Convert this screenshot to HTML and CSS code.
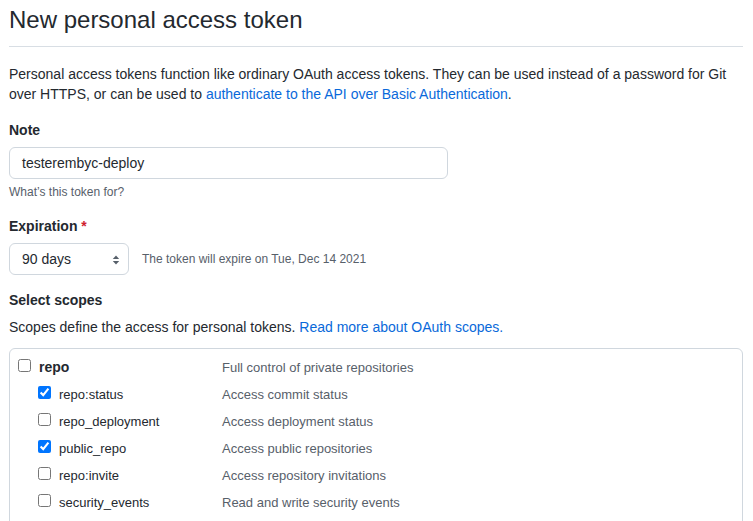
FILE: index.html
```html
<!DOCTYPE html>
<html lang="en">
<head>
<meta charset="utf-8">
<title>New personal access token</title>
<link rel="stylesheet" href="styles.css">
</head>
<body>
<div class="page">
  <div class="subhead">
    <h2 class="subhead-heading">New personal access token</h2>
  </div>
  <p class="intro">Personal access tokens function like ordinary OAuth access tokens. They can be used instead of a password for Git over HTTPS, or can be used to <a href="#">authenticate to the API over Basic Authentication</a>.</p>

  <div class="form-group note-group">
    <label class="form-label">Note</label>
    <div class="text-input">testerembyc-deploy</div>
    <p class="note">What’s this token for?</p>
  </div>

  <div class="form-group exp-group">
    <label class="form-label">Expiration <span class="req">*</span></label>
    <div class="exp-row">
      <div class="select">
        <span>90 days</span>
        <svg class="select-arrow" width="8" height="12" viewBox="0 0 8 12"><path d="M4 1.5 L7.2 5 H0.8 Z" fill="#57606a"/><path d="M4 10.5 L7.2 7 H0.8 Z" fill="#57606a"/></svg>
      </div>
      <span class="exp-note">The token will expire on Tue, Dec 14 2021</span>
    </div>
  </div>

  <div class="form-group scopes-group">
    <label class="form-label">Select scopes</label>
    <p class="scopes-desc">Scopes define the access for personal tokens. <a href="#">Read more about OAuth scopes.</a></p>
  </div>

  <div class="scopes-box">
    <div class="scope-row">
      <input type="checkbox" class="cb">
      <span class="scope-name parent">repo</span>
      <span class="scope-desc">Full control of private repositories</span>
    </div>
    <div class="scope-row child">
      <input type="checkbox" class="cb" checked>
      <span class="scope-name">repo:status</span>
      <span class="scope-desc">Access commit status</span>
    </div>
    <div class="scope-row child">
      <input type="checkbox" class="cb">
      <span class="scope-name">repo_deployment</span>
      <span class="scope-desc">Access deployment status</span>
    </div>
    <div class="scope-row child">
      <input type="checkbox" class="cb" checked>
      <span class="scope-name">public_repo</span>
      <span class="scope-desc">Access public repositories</span>
    </div>
    <div class="scope-row child">
      <input type="checkbox" class="cb">
      <span class="scope-name">repo:invite</span>
      <span class="scope-desc">Access repository invitations</span>
    </div>
    <div class="scope-row child">
      <input type="checkbox" class="cb">
      <span class="scope-name">security_events</span>
      <span class="scope-desc">Read and write security events</span>
    </div>
  </div>
</div>
</body>
</html>
```
FILE: styles.css
```css
html, body {
  margin: 0;
  padding: 0;
  background: #ffffff;
}
body {
  font-family: "Liberation Sans", Arial, sans-serif;
  font-size: 14px;
  line-height: 20px;
  color: #24292f;
}
.page {
  width: 734px;
  padding: 5px 0 0 9px;
}
a {
  color: #0969da;
  text-decoration: none;
}
.subhead {
  border-bottom: 1px solid #d8dee4;
  padding-bottom: 11px;
}
.subhead-heading {
  margin: 0;
  font-size: 24px;
  line-height: 30px;
  font-weight: 400;
}
.intro {
  margin: 17px 0 0 0;
}
.form-group {
  display: flex;
  flex-direction: column;
  align-items: flex-start;
}
.note-group {
  margin-top: 16px;
}
.form-label {
  font-weight: 700;
  line-height: 20px;
}
.req {
  color: #cf222e;
}
.text-input {
  margin-top: 7px;
  box-sizing: border-box;
  width: 439px;
  height: 32px;
  border: 1px solid #d0d7de;
  border-radius: 6px;
  padding: 0 12px;
  line-height: 30px;
  background: #ffffff;
}
.note {
  margin: 4px 0 0 0;
  font-size: 12px;
  line-height: 18px;
  color: #57606a;
}
.exp-group {
  margin-top: 15px;
}
.exp-row {
  margin-top: 7px;
  display: flex;
  align-items: center;
  gap: 13px;
}
.select {
  box-sizing: border-box;
  width: 120px;
  height: 32px;
  border: 1px solid #d0d7de;
  border-radius: 6px;
  padding: 0 8px 0 12px;
  display: flex;
  align-items: center;
  justify-content: space-between;
  background: #ffffff;
}
.select-arrow {
  display: block;
  margin-top: 1px;
}
.exp-note {
  font-size: 12px;
  line-height: 18px;
  color: #57606a;
}
.scopes-group {
  margin-top: 15px;
}
.scopes-desc {
  margin: 7px 0 0 0;
}
.scopes-box {
  margin-top: 11px;
  border: 1px solid #d0d7de;
  border-radius: 6px;
  padding: 5px 0 0 8px;
  height: 180px;
}
.scope-row {
  display: flex;
  align-items: flex-start;
  height: 27px;
  line-height: 27px;
}
.scope-row.child {
  padding-left: 20px;
}
.cb {
  margin: 5px 8px 0 0;
  width: 13px;
  height: 13px;
  flex: none;
}
.scope-name {
  width: 183px;
  flex: none;
}
.scope-row.child .scope-name {
  width: 163px;
  font-size: 13px;
}
.scope-name.parent {
  font-weight: 700;
}
.scope-desc {
  font-size: 13px;
  color: #57606a;
}
```
